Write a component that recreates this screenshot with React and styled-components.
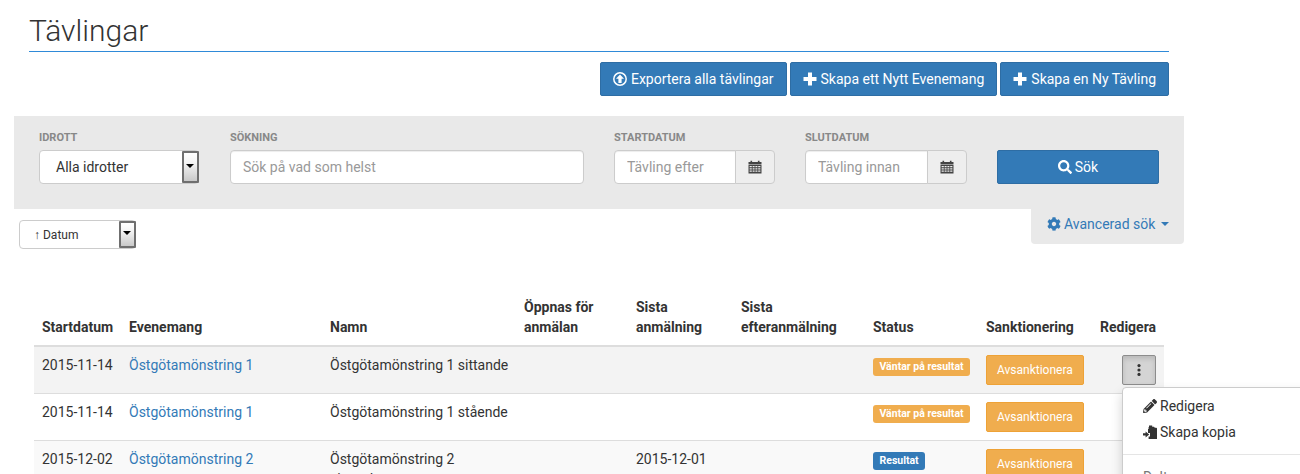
import React from "react";
import styled, { createGlobalStyle } from "styled-components";
import { FaCog, FaSearch, FaPencilAlt } from "react-icons/fa";

const Global = createGlobalStyle`
  html, body { margin: 0; padding: 0; height: 474px; overflow: hidden; background: #fff; }
  body { font-family: Roboto, "Liberation Sans", sans-serif; font-size: 14px; line-height: 20px; color: #333; }
  * { box-sizing: border-box; }
`;

const Page = styled.div`
  width: 1300px;
  height: 474px;
  overflow: hidden;
  padding: 0 116px 0 14px;
`;
const Header = styled.header`
  margin: 0 15px;
`;
const Title = styled.h1`
  margin: 0;
  padding: 14px 0 4px;
  font-size: 30px;
  line-height: 33px;
  font-weight: 300;
  color: #333;
  border-bottom: 1px solid #2f8ad8;
`;
const Actions = styled.div`
  display: flex;
  justify-content: flex-end;
  gap: 3px;
  margin-top: 10px;
`;
const PrimaryButton = styled.button`
  display: inline-flex;
  align-items: center;
  justify-content: center;
  gap: ${(p) => p.$gap || "4px"};
  height: 34px;
  padding: 0 12px;
  width: ${(p) => p.$width || "auto"};
  font: inherit;
  color: #fff;
  background: #337ab7;
  border: 1px solid #2e6da4;
  border-radius: 2px;
  svg { flex: none; }
`;
const FilterPanel = styled.section`
  display: flex;
  gap: 30px;
  height: 93px;
  margin-top: 20px;
  padding: 14px 25px 0;
  background: #e9e9e9;
`;
const Field = styled.div`
  width: ${(p) => p.$width};
  margin-left: ${(p) => p.$nudge || 0};
  flex: none;
`;
const FieldLabel = styled.label`
  display: block;
  height: 20px;
  font-size: 11px;
  line-height: 15px;
  font-weight: 700;
  text-transform: uppercase;
  color: #888;
`;
const SelectBox = styled.div`
  position: relative;
  display: flex;
  align-items: center;
  height: ${(p) => (p.$small ? "29px" : "34px")};
  width: ${(p) => p.$width || "auto"};
  padding-left: ${(p) => (p.$small ? "14px" : "16px")};
  font-size: ${(p) => (p.$small ? "12px" : "14px")};
  background: #fff;
  border: 1px solid #ccc;
  border-radius: 4px;
`;
const SelectArrow = styled.span`
  position: absolute;
  top: 0;
  right: -1px;
  bottom: 0;
  width: 17px;
  border: 2px solid #6f6f6f;
  border-radius: 1px;
  background: linear-gradient(#ffffff, #f4f4f4 35%, #c9c9c9);
  &::after {
    content: "";
    position: absolute;
    left: 2px;
    top: 45%;
    margin-top: -2px;
    border-style: solid;
    border-width: 4px 4.5px 0;
    border-color: #000 transparent transparent;
  }
`;
const TextInput = styled.input`
  display: block;
  width: 100%;
  min-width: 0;
  height: 34px;
  padding: 0 12px;
  font: inherit;
  color: #555;
  background: #fff;
  border: 1px solid #ccc;
  border-radius: ${(p) => (p.$grouped ? "4px 0 0 4px" : "4px")};
  box-shadow: inset 0 1px 1px rgba(0, 0, 0, 0.075);
  &::placeholder { color: #999; opacity: 1; }
`;
const DateGroup = styled.div`
  display: flex;
`;
const Addon = styled.span`
  display: flex;
  align-items: center;
  justify-content: center;
  flex: none;
  width: 40px;
  height: 34px;
  margin-left: -1px;
  background: #eee;
  border: 1px solid #ccc;
  border-radius: 0 4px 4px 0;
`;
const SubBar = styled.div`
  display: flex;
  justify-content: space-between;
  align-items: flex-start;
  height: 40px;
`;
const SortSlot = styled.div`
  margin: 11px 0 0 5px;
`;
const AdvancedTab = styled.a`
  display: flex;
  align-items: center;
  gap: 3px;
  width: 153px;
  height: 35px;
  padding: 0 0 6px 16px;
  color: #337ab7;
  background: #e9e9e9;
  border-radius: 0 0 4px 4px;
`;
const Caret = styled.span`
  width: 0;
  height: 0;
  margin-left: 3px;
  border-style: solid;
  border-width: 4px 4px 0;
  border-color: #337ab7 transparent transparent;
`;
const Table = styled.table`
  width: 1130px;
  margin: 40px 0 0 20px;
  table-layout: fixed;
  border-collapse: separate;
  border-spacing: 0;
`;
const Head = styled.th`
  width: ${(p) => p.$width};
  padding: 8px;
  vertical-align: bottom;
  text-align: left;
  font-weight: 700;
  border-bottom: 2px solid #ddd;
`;
const Row = styled.tr`
  background: ${(p) => p.$bg || "#fff"};
`;
const Cell = styled.td`
  padding: 8px;
  vertical-align: top;
  white-space: nowrap;
  text-align: ${(p) => p.$align || "left"};
  border-bottom: 1px solid #ddd;
`;
const EventLink = styled.a`
  color: #337ab7;
`;
const Badge = styled.span`
  display: inline-block;
  height: 18px;
  margin-top: 3px;
  padding: 0 6.5px;
  font-size: 10.5px;
  line-height: 17px;
  font-weight: 700;
  color: #fff;
  background: ${(p) => p.$bg};
  border-radius: 3px;
  vertical-align: top;
`;
const WarnButton = styled.button`
  display: block;
  height: 30px;
  padding: 0 10px;
  font-family: inherit;
  font-size: 12px;
  color: #fff;
  background: #f0ad4e;
  border: 1px solid #eea236;
  border-radius: 2px;
`;
const KebabWrap = styled.div`
  position: relative;
  display: inline-block;
  vertical-align: top;
`;
const KebabButton = styled.button`
  display: flex;
  align-items: center;
  justify-content: center;
  width: 34px;
  height: 30px;
  padding: 0 1px 0 0;
  background: ${(p) => (p.$open ? "#d4d4d4" : "#fff")};
  border: 1px solid ${(p) => (p.$open ? "#8c8c8c" : "#ccc")};
  border-radius: 2px;
  box-shadow: ${(p) => (p.$open ? "inset 0 3px 5px rgba(0,0,0,.125)" : "none")};
`;
const Menu = styled.ul`
  position: absolute;
  z-index: 5;
  top: 32px;
  left: 0;
  width: 200px;
  margin: 0;
  padding: 5px 0;
  list-style: none;
  text-align: left;
  background: #fff;
  border: 1px solid #ccc;
  border-radius: 4px;
  box-shadow: 0 6px 12px rgba(0, 0, 0, 0.175);
`;
const MenuItem = styled.li`
  display: flex;
  align-items: center;
  gap: 3px;
  height: 26px;
  padding: 0 20px;
  color: ${(p) => (p.$muted ? "#777" : "#333")};
`;
const MenuDivider = styled.li`
  height: 1px;
  margin: 9px 0;
  background: #e5e5e5;
`;

const ExportIcon = () => (
  <svg width="14" height="14" viewBox="0 0 14 14" fill="none">
    <circle cx="7" cy="7" r="6.2" stroke="#fff" strokeWidth="1.5" />
    <path d="M7 2.6 11 6.8H8.6V11H5.4V6.8H3Z" fill="#fff" />
  </svg>
);
const PlusIcon = () => (
  <svg width="14" height="14" viewBox="0 0 14 14">
    <path d="M5 0.5h4v4.5h4.5v4H9v4.5H5V9H0.5V5H5z" fill="#fff" />
  </svg>
);
const CalendarIcon = () => (
  <svg width="14" height="14" viewBox="0 0 14 14">
    <path d="M0.5 2h2V0.8h1.6V2h5.8V0.8h1.6V2h2v2.4h-13z" fill="#444" />
    <path
      fillRule="evenodd"
      d="M0.5 5h13v8.6h-13zM1.6 6v1.3h2.2V6zm3 0v1.3h2V6zm2.8 0v1.3h2V6zm2.8 0v1.3h2.2V6zM1.6 8.2v1.3h2.2V8.2zm3 0v1.3h2V8.2zm2.8 0v1.3h2V8.2zm2.8 0v1.3h2.2V8.2zM1.6 10.4v1.3h2.2v-1.3zm3 0v1.3h2v-1.3zm2.8 0v1.3h2v-1.3zm2.8 0v1.3h2.2v-1.3z"
      fill="#444"
    />
  </svg>
);
const DotsIcon = () => (
  <svg width="4" height="12" viewBox="0 0 4 12">
    <circle cx="2" cy="1.6" r="1.6" fill="#333" />
    <circle cx="2" cy="6" r="1.6" fill="#333" />
    <circle cx="2" cy="10.4" r="1.6" fill="#333" />
  </svg>
);
const CopyIcon = () => (
  <svg width="14" height="14" viewBox="0 0 14 14">
    <path d="M6 0.5h3.2v1.2H11l0.8 1h1.4a0.8 0.8 0 0 1 0.8 0.8V14H5.6v-2.4H7V8H5V4h0.6V2H6z" fill="#333" />
    <path d="M0 8.2h2.6V6.4L6.2 9.4 2.6 12.4v-1.8H0z" fill="#333" />
  </svg>
);

const columns = [
  ["Startdatum", "87px"],
  ["Evenemang", "201px"],
  ["Namn", "194px"],
  ["Öppnas för anmälan", "112px"],
  ["Sista anmälning", "105px"],
  ["Sista efteranmälning", "132px"],
  ["Status", "113px"],
  ["Sanktionering", "114px"],
  ["Redigera", "72px"],
];

const rows = [
  { date: "2015-11-14", event: "Östgötamönstring 1", name: ["Östgötamönstring 1 sittande"], status: "Väntar på resultat", color: "#f0ad4e", bg: "#f3f3f3", open: true },
  { date: "2015-11-14", event: "Östgötamönstring 1", name: ["Östgötamönstring 1 stående"], status: "Väntar på resultat", color: "#f0ad4e", bg: "#fff" },
  { date: "2015-12-02", event: "Östgötamönstring 2", name: ["Östgötamönstring 2", "sittande"], last: "2015-12-01", status: "Resultat", color: "#337ab7", bg: "#f9f9f9" },
];

const Select = ({ label, small, width }) => (
  <SelectBox $small={small} $width={width}>
    {label}
    <SelectArrow />
  </SelectBox>
);

export default function App() {
  return (
    <Page>
      <Global />
      <Header>
        <Title>Tävlingar</Title>
        <Actions>
          <PrimaryButton><ExportIcon />Exportera alla tävlingar</PrimaryButton>
          <PrimaryButton><PlusIcon />Skapa ett Nytt Evenemang</PrimaryButton>
          <PrimaryButton><PlusIcon />Skapa en Ny Tävling</PrimaryButton>
        </Actions>
      </Header>
      <FilterPanel>
        <Field $width="160px">
          <FieldLabel>Idrott</FieldLabel>
          <Select label="Alla idrotter" />
        </Field>
        <Field $width="354px" $nudge="1px">
          <FieldLabel>Sökning</FieldLabel>
          <TextInput placeholder="Sök på vad som helst" />
        </Field>
        <Field $width="161px">
          <FieldLabel>Startdatum</FieldLabel>
          <DateGroup>
            <TextInput $grouped placeholder="Tävling efter" />
            <Addon><CalendarIcon /></Addon>
          </DateGroup>
        </Field>
        <Field $width="162px">
          <FieldLabel>Slutdatum</FieldLabel>
          <DateGroup>
            <TextInput $grouped placeholder="Tävling innan" />
            <Addon><CalendarIcon /></Addon>
          </DateGroup>
        </Field>
        <Field $width="162px">
          <FieldLabel>&nbsp;</FieldLabel>
          <PrimaryButton $width="100%" $gap="3px"><FaSearch size={14} />Sök</PrimaryButton>
        </Field>
      </FilterPanel>
      <SubBar>
        <SortSlot>
          <Select small width="117px" label="↑ Datum" />
        </SortSlot>
        <AdvancedTab><FaCog size={14} />Avancerad sök <Caret /></AdvancedTab>
      </SubBar>
      <Table>
        <thead>
          <tr>
            {columns.map(([title, width]) => (
              <Head key={title} $width={width}>{title}</Head>
            ))}
          </tr>
        </thead>
        <tbody>
          {rows.map((row, i) => (
            <Row key={i} $bg={row.bg}>
              <Cell>{row.date}</Cell>
              <Cell><EventLink>{row.event}</EventLink></Cell>
              <Cell>
                {row.name.map((line) => (
                  <div key={line}>{line}</div>
                ))}
              </Cell>
              <Cell />
              <Cell>{row.last}</Cell>
              <Cell />
              <Cell><Badge $bg={row.color}>{row.status}</Badge></Cell>
              <Cell><WarnButton>Avsanktionera</WarnButton></Cell>
              <Cell $align="right">
                <KebabWrap>
                  <KebabButton $open={row.open}><DotsIcon /></KebabButton>
                  {row.open && (
                    <Menu>
                      <MenuItem><FaPencilAlt size={14} />Redigera</MenuItem>
                      <MenuItem><CopyIcon />Skapa kopia</MenuItem>
                      <MenuDivider />
                      <MenuItem $muted>Delta</MenuItem>
                    </Menu>
                  )}
                </KebabWrap>
              </Cell>
            </Row>
          ))}
        </tbody>
      </Table>
    </Page>
  );
}
